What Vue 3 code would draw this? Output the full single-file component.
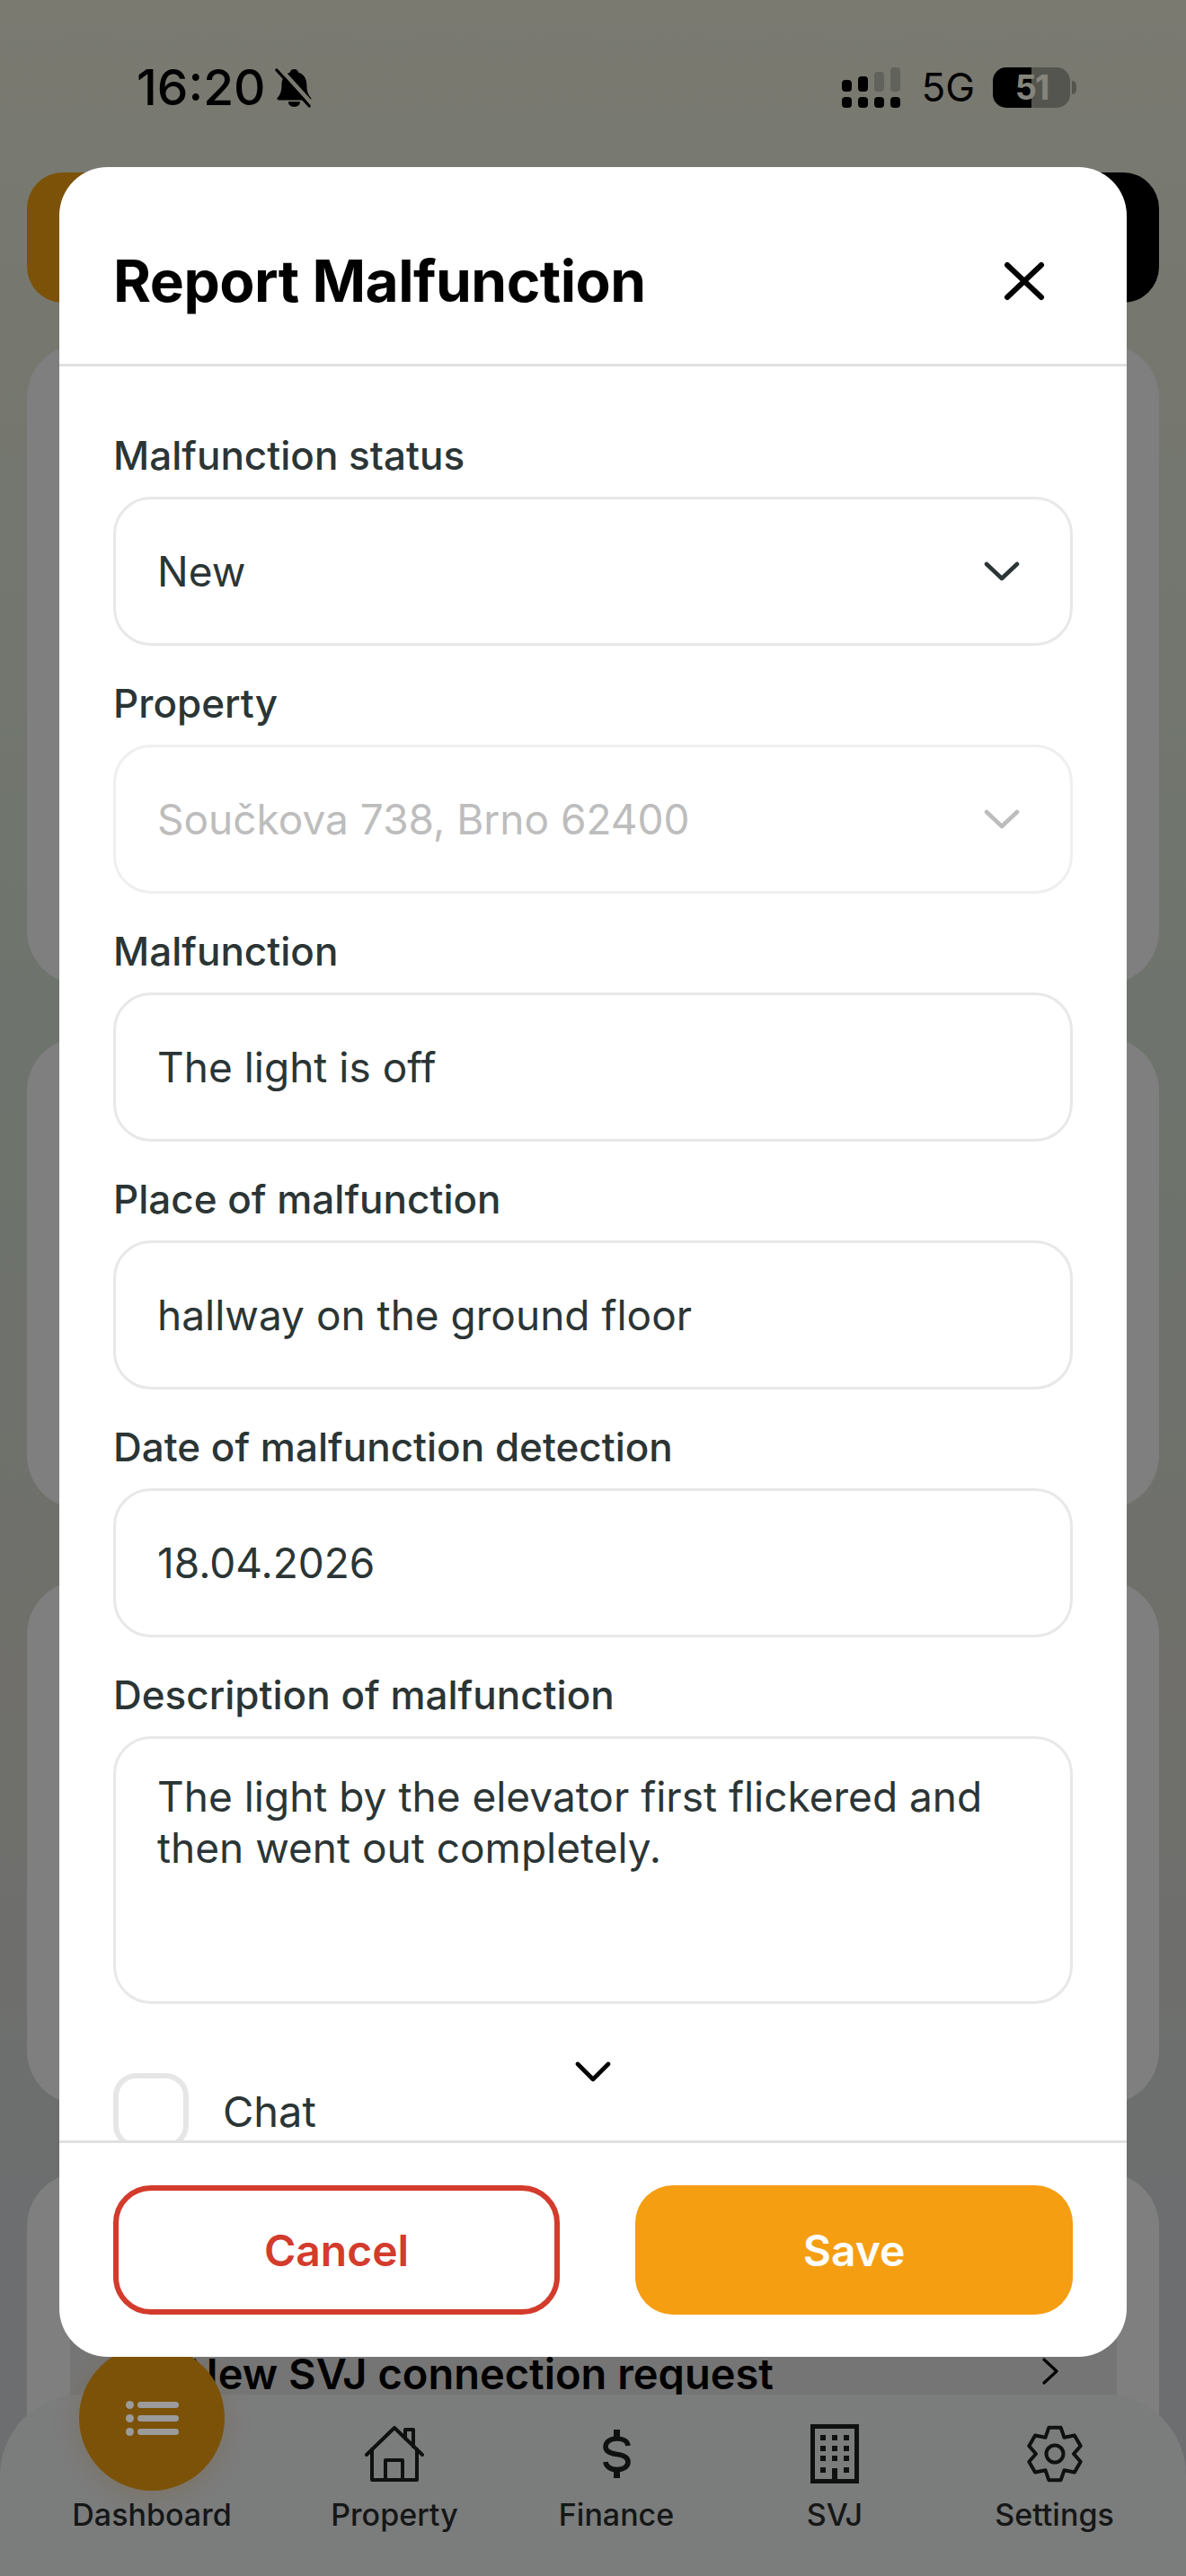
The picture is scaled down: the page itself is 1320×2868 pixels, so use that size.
<script setup>
const fields = [
  { label: 'Malfunction status', value: 'New', select: true },
  { label: 'Property', value: 'Součkova 738, Brno 62400', select: true, disabled: true },
  { label: 'Malfunction', value: 'The light is off' },
  { label: 'Place of malfunction', value: 'hallway on the ground floor' },
  { label: 'Date of malfunction detection', value: '18.04.2026' }
]

const tabs = [
  { name: 'Dashboard', active: true },
  { name: 'Property' },
  { name: 'Finance' },
  { name: 'SVJ' },
  { name: 'Settings' }
]

// six-tooth gear outline around (31, 32)
function gearOutline() {
  const points = []
  for (let i = 0; i < 6; i++) {
    const mid = i * 60 - 90
    const ring = [[-30, 21], [-13, 30], [13, 30], [30, 21]]
    ring.forEach(([offset, radius]) => {
      const a = ((mid + offset) * Math.PI) / 180
      points.push(`${(31 + radius * Math.cos(a)).toFixed(1)} ${(32 + radius * Math.sin(a)).toFixed(1)}`)
    })
  }
  return `M${points.join('L')}Z`
}
const gearPath = gearOutline()
</script>

<template>
  <div class="screen">
    <!-- dashboard behind the dialog -->
    <div class="page">
      <div class="top-actions">
        <div class="action orange"></div>
        <div class="action black"></div>
      </div>
      <div class="card c1"></div>
      <div class="card c2"></div>
      <div class="card c3"></div>
      <div class="card c4">
        <div class="request">
          <span class="request-text">New SVJ connection request</span>
          <svg class="request-arrow" viewBox="0 0 18 30" fill="none" stroke="#000" stroke-width="3.2" stroke-linecap="round" stroke-linejoin="round"><path d="M2 2l14 13L2 28" /></svg>
        </div>
      </div>
    </div>

    <nav class="tabbar">
      <div v-for="tab in tabs" :key="tab.name" class="tab">
        <div v-if="tab.active" class="fab">
          <svg viewBox="0 0 59 39" width="59" height="39" fill="#9b9b9b">
            <circle cx="4.5" cy="4.5" r="4.5" /><circle cx="4.5" cy="19.5" r="4.5" /><circle cx="4.5" cy="34.5" r="4.5" />
            <rect x="13" y="1" width="46" height="7" rx="3.5" /><rect x="13" y="16" width="46" height="7" rx="3.5" /><rect x="13" y="31" width="46" height="7" rx="3.5" />
          </svg>
        </div>
        <div v-else class="tab-icon">
          <svg v-if="tab.name === 'Property'" width="66" height="62" viewBox="0 0 66 62" fill="none" stroke="#1f2222" stroke-width="4" stroke-linejoin="round" stroke-linecap="round">
            <path d="M2 32L33 2l31 30" />
            <path d="M45 14V4h9v19" />
            <path d="M8 26v34h50V26" />
            <path d="M23 60V38h19v22" />
          </svg>
          <svg v-else-if="tab.name === 'Finance'" width="31" height="54" viewBox="0 0 31 54" fill="none" stroke="#1f2222" stroke-width="5.6">
            <path d="M28 18c-.5-5-5.500-8-12.500-8S3 13.500 3 19c0 5.500 5 7.500 12.500 8.500S28 30.500 28 36c0 5.500-5.500 8.500-12.500 8.500S3.500 41 3 36" />
            <path d="M15.500 0v9M15.500 45v9" stroke-width="7" />
          </svg>
          <svg v-else-if="tab.name === 'SVJ'" width="54" height="66" viewBox="0 0 54 66" fill="#1f2222">
            <path d="M0 0h54v66H0zM5 5v56h44V5z" fill-rule="evenodd" />
            <rect x="24" y="49" width="6" height="14" />
            <template v-for="y in [12, 24, 35, 48]" :key="y">
              <rect x="11" :y="y" width="6" height="6" />
              <rect v-if="y !== 48" x="24" :y="y" width="6" height="6" />
              <rect x="37" :y="y" width="6" height="6" />
            </template>
          </svg>
          <svg v-else width="62" height="64" viewBox="0 0 62 64" fill="none" stroke="#1f2222" stroke-width="4" stroke-linejoin="round">
            <path :d="gearPath" />
            <circle cx="31" cy="32" r="9.500" />
          </svg>
        </div>
        <span class="tab-name">{{ tab.name }}</span>
      </div>
    </nav>

    <div class="scrim"></div>

    <div class="statusbar">
      <div class="status-left">
        <span class="clock">16:20</span>
        <svg class="bell" viewBox="0 0 44 48" width="41" height="45" fill="#000">
          <path d="M23 2c3 0 5 2 5 4 7 2 10 8 10 15 0 8 2 12 5 15 1 2 0 3-2 3H5c-2 0-3-1-2-3 3-3 5-7 5-15 0-7 3-13 10-15 0-2 2-4 5-4z" />
          <path d="M16 41h14c0 4-3 6-7 6s-7-2-7-6z" />
          <path d="M5 0l39 43" stroke="#7a7a70" stroke-width="5" />
          <path d="M2 3l39 43" stroke="#000" stroke-width="3.400" stroke-linecap="round" />
        </svg>
      </div>
      <div class="status-right">
        <svg viewBox="0 0 65 45" width="65" height="45">
          <rect x="0" y="14" width="11" height="13" rx="4" fill="#000" /><rect x="18" y="10" width="11" height="17" rx="4" fill="#000" />
          <rect x="36" y="5" width="11" height="22" rx="4" fill="#62625c" /><rect x="54" y="0" width="11" height="27" rx="4" fill="#62625c" />
          <rect x="0" y="33" width="11" height="12" rx="4" fill="#000" /><rect x="18" y="33" width="11" height="12" rx="4" fill="#000" />
          <rect x="36" y="33" width="11" height="12" rx="4" fill="#000" /><rect x="54" y="33" width="11" height="12" rx="4" fill="#000" />
        </svg>
        <span class="network">5G</span>
        <div class="battery">
          <div class="battery-body"><span class="battery-level">51</span></div>
          <div class="battery-cap"></div>
        </div>
      </div>
    </div>

    <section class="modal">
      <header class="modal-head">
        <h1>Report Malfunction</h1>
        <svg class="close" viewBox="0 0 46 44" fill="none" stroke="#000" stroke-width="6" stroke-linecap="round"><path d="M4 4l38 36M42 4L4 40" /></svg>
      </header>

      <div class="modal-body">
        <div v-for="field in fields" :key="field.label" class="field">
          <label>{{ field.label }}</label>
          <div class="input" :class="{ disabled: field.disabled }">
            <span>{{ field.value }}</span>
            <svg v-if="field.select" class="chevron" viewBox="0 0 40 22" fill="none" stroke="currentColor" stroke-width="4.600" stroke-linecap="round" stroke-linejoin="round"><path d="M3 3l17 16L37 3" /></svg>
          </div>
        </div>
        <div class="field">
          <label>Description of malfunction</label>
          <div class="input textarea">The light by the elevator first flickered and then went out completely.</div>
        </div>
        <svg class="more" viewBox="0 0 40 24" fill="none" stroke="#000" stroke-width="4.600" stroke-linecap="round" stroke-linejoin="round"><path d="M3 3l17 17L37 3" /></svg>
        <div class="check-row">
          <div class="checkbox"></div>
          <span>Chat</span>
        </div>
      </div>

      <footer class="modal-foot">
        <button class="btn cancel">Cancel</button>
        <button class="btn save">Save</button>
      </footer>
    </section>
  </div>
</template>

<style scoped>
.screen {
  position: relative;
  width: 1320px;
  height: 2868px;
  overflow: hidden;
  font-family: Inter, "Liberation Sans", sans-serif;
}

.page {
  box-sizing: border-box;
  height: 100%;
  padding: 192px 30px 0;
  background: linear-gradient(180deg, #f4f4e2 0%, #dce8da 40%, #e0dfd6 65%, #d8dddf 88%, #d8dddf 100%);
}

.top-actions {
  display: flex;
  justify-content: space-between;
  height: 145px;
}

.action {
  width: 300px;
  border-radius: 40px;
}

.orange { background: #f8a510; }
.black { background: #000; }

.card {
  background: #fff;
  border-radius: 60px;
}

.c1 { margin-top: 46px; height: 713px; }
.c2 { margin-top: 59px; height: 525px; }
.c3 { margin-top: 80px; height: 583px; }
.c4 { margin-top: 76px; height: 500px; padding: 130px 47px 0 48px; }

.request {
  height: 186px;
  background: #ebebeb;
  display: flex;
  align-items: center;
  justify-content: space-between;
  padding: 0 65px 0 129px;
}

.request-text {
  font-size: 47px;
  font-weight: 600;
  color: #000;
}

.request-arrow {
  width: 18px;
  height: 30px;
  margin-top: -4px;
}

.tabbar {
  position: absolute;
  left: 0;
  right: 0;
  bottom: 0;
  height: 202px;
  box-sizing: border-box;
  padding: 0 33px 0 34px;
  background: #f7f8f9;
  border-radius: 90px 90px 0 0;
  display: grid;
  grid-template-columns: 270px 270px 224px 262px 227px;
}

.tab {
  position: relative;
  display: flex;
  flex-direction: column;
  align-items: center;
}

.tab-icon {
  height: 66px;
  margin-top: 33px;
  display: flex;
  align-items: center;
}

.tab-name {
  position: absolute;
  top: 113px;
  font-size: 34px;
  font-weight: 500;
  color: #2b2f2f;
}

.fab {
  position: absolute;
  top: -55px;
  width: 162px;
  height: 162px;
  border-radius: 50%;
  background: #f8a510;
  box-shadow: 0 6px 30px rgba(245, 163, 13, 0.2);
  display: flex;
  align-items: center;
  justify-content: center;
}

/* the list glyph keeps its tone over the dimmed button */
.fab svg {
  position: relative;
  z-index: 1;
}

.scrim {
  position: absolute;
  inset: 0;
  background: rgba(0, 0, 0, 0.5);
}

.statusbar {
  position: absolute;
  top: 62px;
  left: 152px;
  right: 122px;
  height: 70px;
  display: flex;
  justify-content: space-between;
  align-items: center;
}

.status-left,
.status-right {
  display: flex;
  align-items: center;
}

.clock {
  font-size: 55px;
  font-weight: 500;
  color: #000;
}

.bell { margin-left: 10px; }

.network {
  font-size: 44px;
  color: #000;
  margin: 0 20px 0 23px;
}

.battery {
  display: flex;
  align-items: center;
}

.battery-body {
  width: 86px;
  height: 45px;
  border-radius: 15px;
  background: linear-gradient(90deg, #000 50%, #55554f 50%);
  display: flex;
  align-items: center;
  justify-content: center;
}

.battery-level {
  font-size: 38px;
  font-weight: 700;
  letter-spacing: -2px;
  color: #85857c;
}

.battery-cap {
  width: 5px;
  height: 15px;
  margin-left: 2px;
  border-radius: 0 5px 5px 0;
  background: #55554f;
}

.modal {
  position: absolute;
  left: 66px;
  top: 186px;
  width: 1188px;
  height: 2438px;
  background: #fff;
  border-radius: 54px;
  display: flex;
  flex-direction: column;
  overflow: hidden;
}

.modal-head {
  box-sizing: border-box;
  height: 222px;
  flex: none;
  border-bottom: 3px solid #e0e0e0;
  display: flex;
  align-items: center;
  justify-content: space-between;
  padding: 34px 91px 0 60px;
}

h1 {
  margin: 0;
  font-size: 64px;
  font-weight: 700;
  letter-spacing: -0.5px;
  color: #000;
}

.close {
  width: 46px;
  height: 44px;
}

.modal-body {
  flex: 1;
  overflow: hidden;
  padding: 73px 60px 0;
  position: relative;
}

.field { margin-bottom: 38px; }

label {
  display: block;
  font-size: 44px;
  line-height: 52px;
  font-weight: 500;
  color: #2b3535;
  margin-bottom: 20px;
}

.input {
  box-sizing: border-box;
  height: 166px;
  border: 3px solid #e8e8e8;
  border-radius: 42px;
  padding: 0 56px 0 46px;
  display: flex;
  align-items: center;
  justify-content: space-between;
  font-size: 46px;
  color: #2b3535;
}

.input.disabled {
  color: #bdbdbd;
  border-color: #efefef;
}

.chevron {
  width: 40px;
  height: 22px;
}

.textarea {
  display: block;
  height: 298px;
  padding-top: 36px;
  line-height: 57px;
}

.more {
  position: absolute;
  left: 574px;
  top: 1887px;
  width: 40px;
  height: 24px;
}

.check-row {
  display: flex;
  align-items: center;
  gap: 38px;
  margin-top: 77px;
  font-size: 47px;
  color: #2b3535;
}

.checkbox {
  box-sizing: border-box;
  width: 84px;
  height: 84px;
  border: 6px solid #e6e6e6;
  border-radius: 26px;
  flex: none;
}

.modal-foot {
  flex: none;
  height: 241px;
  box-sizing: border-box;
  border-top: 3px solid #e0e0e0;
  padding: 47px 60px;
  display: flex;
  gap: 84px;
}

.btn {
  border-radius: 42px;
  font: 600 48px Inter, "Liberation Sans", sans-serif;
}

.cancel {
  flex: 0 0 497px;
  background: #fff;
  border: 6px solid #d33b2c;
  color: #d33b2c;
}

.save {
  flex: 0 0 487px;
  border: none;
  background: #f59e12;
  color: #fff;
}
</style>
